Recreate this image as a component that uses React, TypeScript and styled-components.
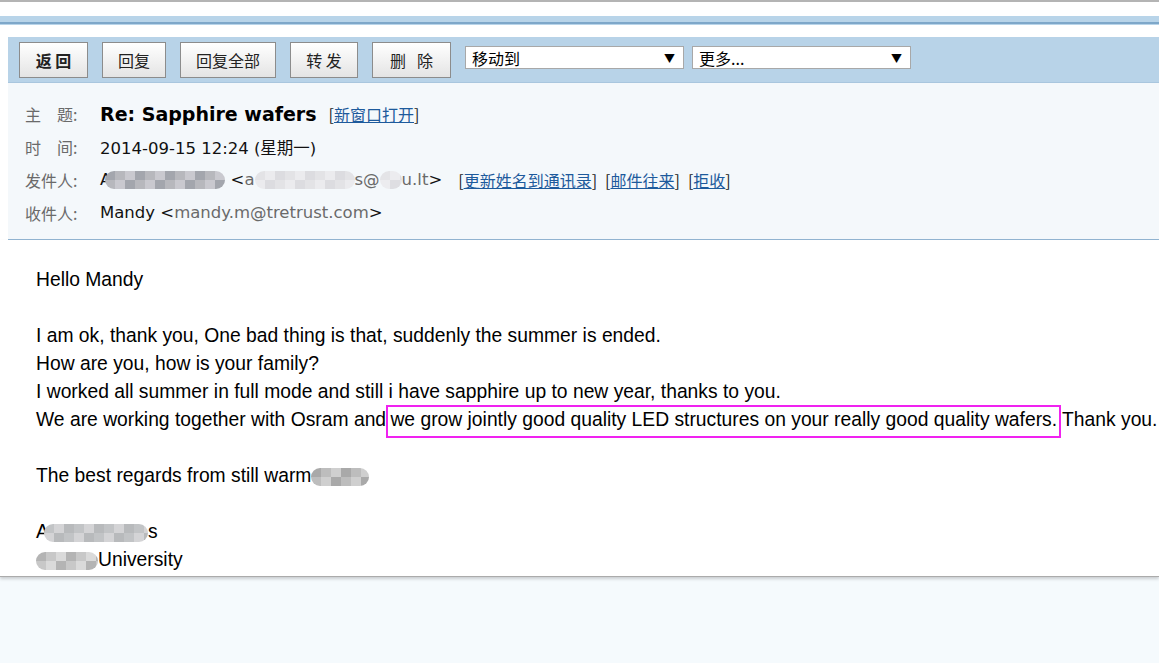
import styled, { createGlobalStyle } from "styled-components";

const Global = createGlobalStyle`
  html, body {
    margin: 0;
    padding: 0;
    background: #fff;
  }
`;

const Page = styled.div`
  min-height: 100vh;
  display: flex;
  flex-direction: column;
  background: #fff;
`;

const TopRule = styled.div`
  height: 2px;
  background: #b4b4b4;
  margin-bottom: 14px;
`;

const Band = styled.div`
  height: 9px;
  margin-bottom: 12px;
  background: linear-gradient(
    to bottom,
    #b8d4e9 0 6px,
    #7ea7c9 6px 8px,
    #b8d4e9 8px 9px
  );
`;

const Panel = styled.div`
  margin-left: 8px;
`;

const Toolbar = styled.div`
  height: 46px;
  box-sizing: border-box;
  display: flex;
  align-items: flex-start;
  gap: 14px;
  padding: 5px 0 0 11px;
  background: #b8d3e8;
  border-bottom: 1px solid #a9c6de;
`;

const Button = styled.button<{ $w: number; $bold?: boolean }>`
  width: ${(p) => p.$w}px;
  height: 36px;
  margin: 0;
  padding: 0;
  border: 1px solid #8c8c8c;
  background: linear-gradient(to bottom, #ffffff, #e4e4e4);
  font-family: "Noto Sans CJK SC", sans-serif;
  font-size: 16px;
  font-weight: ${(p) => (p.$bold ? 700 : 400)};
  color: #222;
  white-space: pre;
`;

const SelectGroup = styled.div`
  display: flex;
  gap: 8px;
  margin-top: 4px;
`;

const Select = styled.div`
  width: 219px;
  height: 23px;
  box-sizing: border-box;
  display: flex;
  align-items: center;
  justify-content: space-between;
  padding: 0 8px 0 6px;
  background: #fff;
  border: 1px solid #a8a8a8;
  font-family: "Noto Sans CJK SC", sans-serif;
  font-size: 16px;
  color: #000;
  span:last-child {
    font-size: 11px;
  }
`;

const Header = styled.div`
  background: #f4f8fb;
  padding: 14px 0 10px;
  border-bottom: 1px solid #93b5d2;
`;

const Row = styled.div`
  height: 33px;
  display: flex;
  align-items: center;
  font-family: "DejaVu Sans", "Noto Sans CJK SC", sans-serif;
  font-size: 16.5px;
  color: #111;
  white-space: pre;
`;

const Label = styled.span`
  width: 92px;
  box-sizing: border-box;
  padding-left: 17px;
  color: #6a6a6a;
  font-family: "Noto Sans CJK SC", sans-serif;
  font-size: 16px;
`;

const Subject = styled.span`
  font-size: 19px;
  font-weight: 700;
  color: #000;
  margin-right: 12px;
`;

const Gray = styled.span`
  color: #6a6a6a;
`;

const Links = styled.span<{ $gap: number }>`
  margin-left: ${(p) => p.$gap}px;
  display: inline-flex;
  gap: 8px;
  font-family: "Noto Sans CJK SC", sans-serif;
  font-size: 16px;
  color: #222;
`;

const Link = styled.a`
  color: #1d5a9c;
  text-decoration: underline;
  cursor: pointer;
`;

const Blur = styled.span<{ $w: number; $a: string; $b: string; $c: string; $pull?: number }>`
  display: inline-block;
  width: ${(p) => p.$w}px;
  height: 18px;
  margin-left: ${(p) => -(p.$pull ?? 0)}px;
  vertical-align: middle;
  border-radius: 9px;
  filter: blur(0.7px);
  background:
    repeating-linear-gradient(
        90deg,
        ${(p) => p.$a} 0 10px,
        ${(p) => p.$b} 10px 20px,
        ${(p) => p.$c} 20px 30px
      )
      top / 100% 50% no-repeat,
    repeating-linear-gradient(
        90deg,
        ${(p) => p.$b} 0 10px,
        ${(p) => p.$c} 10px 20px,
        ${(p) => p.$a} 20px 30px
      )
      bottom / 100% 50% no-repeat;
`;

const Body = styled.div`
  padding: 26px 36px 2px;
  font-family: "Liberation Sans", Arial, sans-serif;
  font-size: 19.3px;
  line-height: 28px;
  color: #000;
  white-space: nowrap;
  border-bottom: 1px solid #ababab;
  box-shadow: 0 2px 3px rgba(0, 0, 0, 0.18);
  position: relative;
  z-index: 1;
`;

const Line = styled.div`
  height: 28px;
`;

const Mark = styled.span`
  border: 2px solid #f022f0;
  padding: 2px 2px 6px;
  margin: 0 -4px 0 -5px;
`;

const Filler = styled.div`
  flex: 1;
  background: #f5fafd;
`;

export default function App() {
  return (
    <Page>
      <Global />
      <TopRule />
      <Band />
      <Panel>
        <Toolbar>
          <Button $w={69} $bold>
            返 回
          </Button>
          <Button $w={64}>回复</Button>
          <Button $w={96}>回复全部</Button>
          <Button $w={68}>转 发</Button>
          <Button $w={79}>删{"   "}除</Button>
          <SelectGroup>
            <Select>
              <span>移动到</span>
              <span>▼</span>
            </Select>
            <Select>
              <span>更多...</span>
              <span>▼</span>
            </Select>
          </SelectGroup>
        </Toolbar>
        <Header>
          <Row>
            <Label>主　题:</Label>
            <Subject>Re: Sapphire wafers</Subject>
            <Links $gap={0}>
              <span>
                [<Link>新窗口打开</Link>]
              </span>
            </Links>
          </Row>
          <Row>
            <Label>时　间:</Label>
            <span>2014-09-15 12:24 (星期一)</span>
          </Row>
          <Row>
            <Label>发件人:</Label>
            <span>A</span>
            <Blur $w={120} $pull={6} $a="#a3a6ad" $b="#b7b8bd" $c="#c9c9cf" />
            <span> &lt;</span>
            <Gray>a</Gray>
            <Blur $w={100} $a="#e3e3e6" $b="#ebebee" $c="#dcdce0" />
            <Gray>s@</Gray>
            <Blur $w={22} $a="#e4e4e7" $b="#ececef" $c="#dedee2" />
            <Gray>u.lt</Gray>
            <span>&gt;</span>
            <Links $gap={16}>
              <span>
                [<Link>更新姓名到通讯录</Link>]
              </span>
              <span>
                [<Link>邮件往来</Link>]
              </span>
              <span>
                [<Link>拒收</Link>]
              </span>
            </Links>
          </Row>
          <Row>
            <Label>收件人:</Label>
            <span>Mandy &lt;</span>
            <Gray>mandy.m@tretrust.com</Gray>
            <span>&gt;</span>
          </Row>
        </Header>
      </Panel>
      <Body>
        <Line>Hello Mandy</Line>
        <Line />
        <Line>I am ok, thank you, One bad thing is that, suddenly the summer is ended.</Line>
        <Line>How are you, how is your family?</Line>
        <Line>
          I worked all summer in full mode and still i have sapphire up to new year, thanks to you.
        </Line>
        <Line>
          We are working together with Osram and{" "}
          <Mark>
            we grow jointly good quality LED structures on your really good quality wafers.
          </Mark>{" "}
          Thank you.
        </Line>
        <Line />
        <Line>
          The best regards from still warm
          <Blur $w={58} $a="#a9a9a9" $b="#bdbdbd" $c="#cfcfcf" />
        </Line>
        <Line />
        <Line>
          A
          <Blur $w={104} $pull={5} $a="#c2c4c6" $b="#d4d4d6" $c="#b8babc" />s
        </Line>
        <Line>
          <Blur $w={62} $a="#b4b4b4" $b="#c8c8c8" $c="#dadada" />
          University
        </Line>
      </Body>
      <Filler />
    </Page>
  );
}
